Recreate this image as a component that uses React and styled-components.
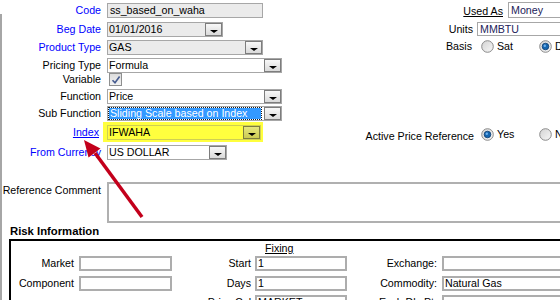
import React from 'react';
import styled, { createGlobalStyle } from 'styled-components';

const GlobalStyle = createGlobalStyle`
  html, body { margin: 0; padding: 0; background: #fff; overflow: hidden; }
  body { font-family: "Liberation Sans", Arial, sans-serif; font-size: 10.67px; color: #000; }
`;

const Page = styled.div`
  position: relative;
  width: 560px;
  height: 300px;
  overflow: hidden;
  &::before {
    content: '';
    position: absolute;
    left: 0;
    top: 14px;
    bottom: 0;
    width: 2px;
    background: #a6a6a6;
  }
`;

const FormStack = styled.div`
  display: flex;
  flex-direction: column;
  width: 608px;
  padding-top: 3px;
`;

const FormRow = styled.div`
  display: grid;
  grid-template-columns: 107px 250px 117px 134px;
  align-items: start;
  height: ${p => p.$h}px;
`;

const FieldLabel = styled.div`
  text-align: right;
  white-space: nowrap;
  padding-right: ${p => p.$pr ?? 6}px;
  padding-top: ${p => p.$pt ?? 0}px;
  line-height: ${p => p.$lh ?? 15}px;
  color: ${p => (p.$blue ? '#0000ff' : '#000')};
  text-decoration: ${p => (p.$link ? 'underline' : 'none')};
`;

const ControlCell = styled.div`
  display: flex;
  align-items: center;
  grid-column: ${p => p.$span ?? 'auto'};
  padding-left: ${p => p.$pl ?? 0}px;
  padding-top: ${p => p.$pt ?? 0}px;
`;

const UsedAsCell = styled.div`
  grid-column: 3 / 5;
  display: flex;
  justify-content: flex-end;
  align-items: flex-start;
  gap: 5px;
`;

const UsedAsLabel = styled.span`
  text-decoration: underline;
  line-height: 15px;
  padding-top: 1px;
`;

const TextField = styled.div`
  box-sizing: border-box;
  width: ${p => p.$w}px;
  height: ${p => p.$h ?? 15}px;
  margin-top: ${p => p.$mt ?? 0}px;
  border: 1px solid #a7a7a7;
  background: ${p => (p.$readOnly ? '#ebebeb' : '#fff')};
  color: ${p => p.$ink ?? '#000'};
  padding-left: 2px;
  line-height: ${p => (p.$h ?? 15) - 2}px;
  white-space: nowrap;
  overflow: hidden;
`;

const SelectBox = styled.div`
  box-sizing: border-box;
  display: flex;
  width: ${p => p.$w}px;
  height: 15px;
  border: 1px solid ${p => (p.$tint ? '#cfcf52' : '#a7a7a7')};
  background: ${p => (p.$tint ? 'transparent' : p.$readOnly ? '#ebebeb' : '#fff')};
`;

const SelectValue = styled.span`
  flex: 1;
  min-width: 0;
  padding-left: 1px;
  line-height: 13px;
  white-space: nowrap;
  overflow: hidden;
`;

const FocusedValue = styled(SelectValue)`
  margin: 1px 3px 1px 1px;
  line-height: 11px;
  background: #3399ff;
  color: #fff;
  outline: 1px dotted #1a1a1a;
`;

const DropButton = styled.span`
  box-sizing: border-box;
  flex: none;
  width: 17px;
  height: 13px;
  border: 1px solid ${p => (p.$tint ? '#7d7d40' : '#7d7d7d')};
  background: ${p => (p.$tint ? 'linear-gradient(#e6e67e, #cbcb52)' : 'linear-gradient(#f8f8f8, #dadada)')};
  display: flex;
  align-items: flex-end;
  justify-content: center;
  padding-bottom: 2px;
  &::after {
    content: '';
    border-left: 4px solid transparent;
    border-right: 4px solid transparent;
    border-top: 3px solid #000;
  }
`;

const Highlight = styled.div`
  margin-left: -4px;
  padding: 3px 2px 2px 4px;
  background: #ffff3e;
`;

const CheckBox = styled.span`
  box-sizing: border-box;
  width: 13px;
  height: 13px;
  margin-left: 2px;
  border: 1px solid #8e8f8f;
  background: linear-gradient(#dcdcdc, #f3f3f3);
  display: flex;
  align-items: center;
  justify-content: center;
`;

const CommentBox = styled.div`
  grid-column: 2 / -1;
  box-sizing: border-box;
  height: 41px;
  border: 2px solid #b0b0b0;
  background: #fff;
`;

const RadioGroup = styled.div`
  display: flex;
  align-items: center;
  height: 13px;
  padding-left: 7px;
  margin-top: ${p => p.$mt ?? 0}px;
`;

const RadioOption = styled.label`
  display: flex;
  align-items: center;
  gap: 3px;
  width: 58px;
  line-height: 13px;
  white-space: nowrap;
`;

const RiskTitle = styled.div`
  margin-top: 1px;
  padding-left: 10px;
  height: 15px;
  line-height: 15px;
  font-weight: bold;
  font-size: 11.3px;
`;

const RiskBox = styled.div`
  margin-left: 9px;
  width: 640px;
  border: 2px solid #000;
  display: grid;
  grid-template-columns: 68px 93px 83px 92px 95px 130px;
  grid-template-rows: 15px 20px 19px 20px;
  align-items: start;
`;

const FixingHeader = styled.div`
  grid-column: 1 / -1;
  padding-left: 254px;
  line-height: 15px;
  text-decoration: underline;
`;

const RiskLabel = styled.div`
  grid-column: ${p => p.$col ?? 'auto'};
  text-align: right;
  padding-right: ${p => p.$pr ?? 5}px;
  line-height: 15px;
  white-space: nowrap;
`;

const RiskField = styled.div`
  box-sizing: border-box;
  height: 15px;
  border: 2px solid #adadad;
  padding-left: 1px;
  line-height: 11px;
  white-space: nowrap;
  overflow: hidden;
`;

const ArrowLayer = styled.svg`
  position: absolute;
  left: 0;
  top: 0;
  pointer-events: none;
  z-index: 5;
`;

function Radio({ checked }) {
  return (
    <svg width="13" height="13" viewBox="0 0 13 13">
      <defs>
        <linearGradient id={checked ? 'rg1' : 'rg0'} x1="0" y1="0" x2="1" y2="1">
          <stop offset="0" stopColor="#d2d2d2" />
          <stop offset="1" stopColor="#f8f8f8" />
        </linearGradient>
      </defs>
      <circle cx="6.5" cy="6.5" r="5.8" fill={`url(#${checked ? 'rg1' : 'rg0'})`} stroke="#8a8a8a" strokeWidth="1" />
      {checked && (
        <>
          <circle cx="6.5" cy="6.5" r="3.3" fill="#1566b0" stroke="#0d3b6e" strokeWidth="0.8" />
          <circle cx="5.8" cy="5.7" r="1.2" fill="#6fb2ee" />
        </>
      )}
    </svg>
  );
}

function Select({ value, w, readOnly, tint, focused }) {
  return (
    <SelectBox $w={w} $readOnly={readOnly} $tint={tint}>
      {focused ? <FocusedValue>{value}</FocusedValue> : <SelectValue>{value}</SelectValue>}
      <DropButton $tint={tint} />
    </SelectBox>
  );
}

export default function App() {
  return (
    <>
      <GlobalStyle />
      <Page>
        <FormStack>
          <FormRow $h={19}>
            <FieldLabel $blue>Code</FieldLabel>
            <ControlCell>
              <TextField $w={156} $readOnly>ss_based_on_waha</TextField>
            </ControlCell>
            <UsedAsCell>
              <UsedAsLabel>Used As</UsedAsLabel>
              <TextField $w={100} $h={16} $mt={-1} $ink="#22225a">Money</TextField>
            </UsedAsCell>
          </FormRow>

          <FormRow $h={18}>
            <FieldLabel $blue>Beg Date</FieldLabel>
            <ControlCell>
              <Select value="01/01/2016" w={116} readOnly />
            </ControlCell>
            <FieldLabel $pr={1} $lh={14}>Units</FieldLabel>
            <ControlCell $pl={3}>
              <TextField $w={131} $h={14} $ink="#22225a">MMBTU</TextField>
            </ControlCell>
          </FormRow>

          <FormRow $h={18}>
            <FieldLabel $blue>Product Type</FieldLabel>
            <ControlCell>
              <Select value="GAS" w={156} readOnly />
            </ControlCell>
            <FieldLabel $pr={2} $lh={13}>Basis</FieldLabel>
            <RadioGroup>
              <RadioOption><Radio />Sat</RadioOption>
              <RadioOption><Radio checked />Daily</RadioOption>
            </RadioGroup>
          </FormRow>

          <FormRow $h={15}>
            <FieldLabel>Pricing Type</FieldLabel>
            <ControlCell>
              <Select value="Formula" w={175} />
            </ControlCell>
          </FormRow>

          <FormRow $h={16}>
            <FieldLabel $lh={13}>Variable</FieldLabel>
            <ControlCell>
              <CheckBox>
                <svg width="10" height="10" viewBox="0 0 10 10">
                  <path d="M1.5 5.2 L4 7.8 L8.6 1.6" fill="none" stroke="#465b8f" strokeWidth="1.6" />
                </svg>
              </CheckBox>
            </ControlCell>
          </FormRow>

          <FormRow $h={17}>
            <FieldLabel>Function</FieldLabel>
            <ControlCell>
              <Select value="Price" w={175} />
            </ControlCell>
          </FormRow>

          <FormRow $h={16}>
            <FieldLabel>Sub Function</FieldLabel>
            <ControlCell>
              <Select value="Sliding Scale based on Index" w={175} focused />
            </ControlCell>
          </FormRow>

          <FormRow $h={23}>
            <FieldLabel $blue $link $pr={8} $lh={20}>Index</FieldLabel>
            <ControlCell>
              <Highlight>
                <Select value="IFWAHA" w={154} tint />
              </Highlight>
            </ControlCell>
            <FieldLabel $pr={0} $pt={7}>Active Price Reference</FieldLabel>
            <RadioGroup $mt={6}>
              <RadioOption><Radio checked />Yes</RadioOption>
              <RadioOption><Radio />No</RadioOption>
            </RadioGroup>
          </FormRow>

          <FormRow $h={37}>
            <FieldLabel $blue>From Currency</FieldLabel>
            <ControlCell>
              <Select value="US DOLLAR" w={120} />
            </ControlCell>
          </FormRow>

          <FormRow $h={41}>
            <FieldLabel $pt={1}>Reference Comment</FieldLabel>
            <CommentBox />
          </FormRow>
        </FormStack>

        <RiskTitle>Risk Information</RiskTitle>
        <RiskBox>
          <FixingHeader>Fixing</FixingHeader>

          <RiskLabel>Market</RiskLabel>
          <RiskField />
          <RiskLabel $pr={4}>Start</RiskLabel>
          <RiskField>1</RiskField>
          <RiskLabel>Exchange:</RiskLabel>
          <RiskField />

          <RiskLabel>Component</RiskLabel>
          <RiskField />
          <RiskLabel $pr={4}>Days</RiskLabel>
          <RiskField>1</RiskField>
          <RiskLabel>Commodity:</RiskLabel>
          <RiskField>Natural Gas</RiskField>

          <RiskLabel $col="3" $pr={4}>Price Col</RiskLabel>
          <RiskField>MARKET</RiskField>
          <RiskLabel>Exch Dlv Pt:</RiskLabel>
          <RiskField />
        </RiskBox>

        <ArrowLayer width="560" height="300" viewBox="0 0 560 300">
          <line x1="142" y1="217" x2="95" y2="153" stroke="#c3001b" strokeWidth="3.5" />
          <polygon points="84,140 100.5,148.5 88.5,157.5" fill="#c3001b" />
        </ArrowLayer>
      </Page>
    </>
  );
}
